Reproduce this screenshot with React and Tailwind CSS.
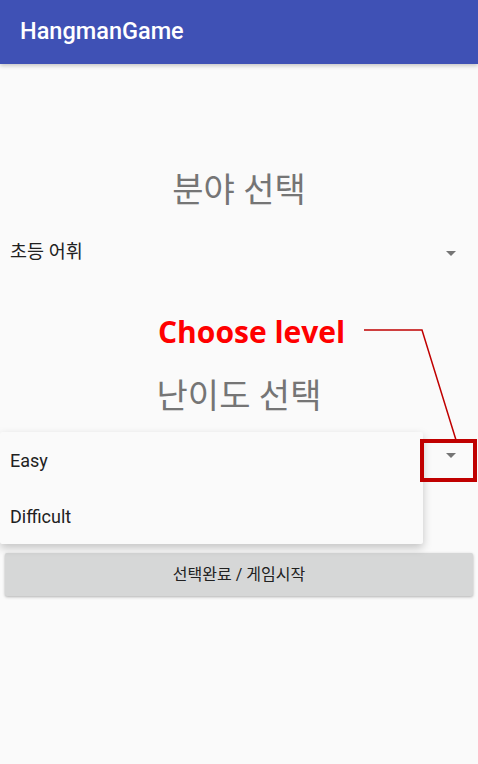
import React from "react";

const KR = { fontFamily: '"Roboto", "Noto Sans CJK KR", sans-serif' };

function Arrow() {
  return (
    <svg width="10" height="5" viewBox="0 0 10 5" className="block">
      <polygon points="0,0 10,0 5,5" fill="#757575" />
    </svg>
  );
}

export default function App() {
  return (
    <div className="relative w-[478px] h-[764px] overflow-hidden bg-[#FAFAFA]" style={KR}>
      <header className="h-16 bg-[#3F51B5] flex items-center pl-5 shadow-[0_2px_4px_rgba(0,0,0,0.2)] relative z-10">
        <span className="text-white text-[23.5px] font-medium">HangmanGame</span>
      </header>

      <main className="flex flex-col">
        <h2 className="mt-[104px] text-center text-[34px] leading-[44px] text-[#757575] font-normal">분야 선택</h2>
        <div className="mt-[17px] h-12 flex items-center justify-between pl-[10px] pr-[22px]">
          <span className="text-[18.5px] text-[#212121]">초등 어휘</span>
          <Arrow />
        </div>
        <h2 className="mt-[97px] text-center text-[34px] leading-[44px] text-[#757575] font-normal">난이도 선택</h2>
        <div className="mt-[13px] h-12 flex items-center justify-end pl-[10px] pr-[22px]">
          <Arrow />
        </div>
        <button className="mt-[74px] mx-[5px] h-[43px] bg-[#D6D7D7] rounded-[2px] shadow-[0_1px_3px_rgba(0,0,0,0.3)] text-[16px] text-[#212121] flex items-center justify-center">
          선택완료 / 게임시작
        </button>
      </main>

      {/* dropdown popup */}
      <div className="absolute left-0 top-[432px] w-[423px] h-[112px] bg-[#FAFAFA] rounded-[2px] shadow-[0_4px_10px_rgba(0,0,0,0.22)] flex flex-col z-20">
        <div className="h-14 flex items-center pl-[10px] text-[18px] text-[#212121]">Easy</div>
        <div className="h-14 flex items-center pl-[10px] text-[18px] text-[#212121]">Difficult</div>
      </div>

      {/* annotation */}
      <div
        className="absolute left-[158px] top-[312px] text-[30px] leading-[40px] font-bold text-[#FF0000] z-30"
        style={{ fontFamily: '"Open Sans", sans-serif' }}
      >
        Choose level
      </div>
      <svg className="absolute left-0 top-0 z-30 pointer-events-none" width="478" height="764">
        <polyline points="364,330 422,330 456,440" fill="none" stroke="#C00000" strokeWidth="1.5" />
      </svg>
      <div className="absolute left-[420px] top-[439px] w-[57px] h-[43px] border-4 border-[#C00000] z-30" />
    </div>
  );
}
